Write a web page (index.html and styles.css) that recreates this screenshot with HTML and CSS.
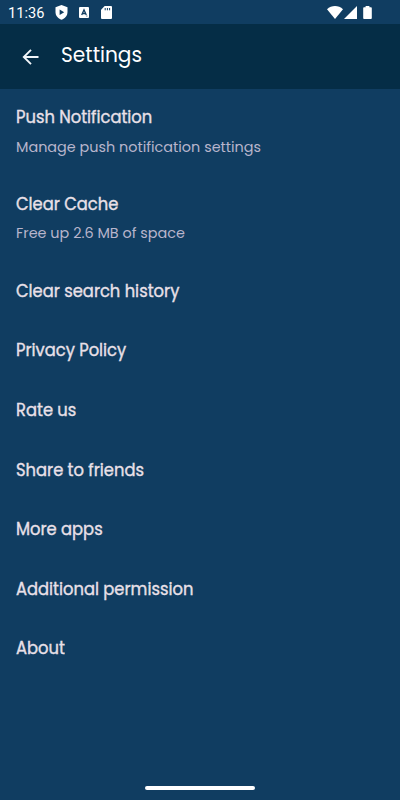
FILE: index.html
```html
<!DOCTYPE html>
<html lang="en">
<head>
    <meta charset="UTF-8">
    <meta name="viewport" content="width=device-width, initial-scale=1.0">
    <title>Settings</title>
    <link rel="stylesheet" href="styles.css">
</head>
<body>

    <!-- Status bar -->
    <div class="status-bar">
        <span class="time">11:36</span>
        <svg class="shield" width="13" height="15" viewBox="0 0 13 15">
            <path fill="#fff" d="M6.500 0L12.500 2.300V7c0 3.800-2.500 6.500-6 7.700C3 13.500.500 10.800.500 7V2.300z"/>
            <path fill="#103d61" d="M4.600 4.600v5.400l4.600-2.700z"/>
        </svg>
        <svg class="letter" width="10" height="11" viewBox="0 0 10 11">
            <rect width="10" height="11" rx="1" fill="#fff"/>
            <path fill="none" stroke="#103d61" stroke-width="1.300" d="M2.700 8L5 2.800 7.300 8M3.500 6.500h3"/>
            <path stroke="#103d61" stroke-width=".6" d="M7 9h1.500"/>
        </svg>
        <svg class="sd-card" width="11" height="13" viewBox="0 0 11 13">
            <path fill="#fff" d="M3.700 0H10q1 0 1 1v11q0 1-1 1H1q-1 0-1-1V3.800z"/>
            <path stroke="#103d61" stroke-width="1" d="M4.200 2v2.300M6.400 2v2.300M8.600 2v2.300"/>
        </svg>
        <div class="signals">
            <svg width="16" height="13" viewBox="0 0 16 13">
                <path fill="#fff" d="M0 3.300C4.500-1.100 11.500-1.100 16 3.300L8 13z"/>
            </svg>
            <svg class="cell" width="13" height="13" viewBox="0 0 13 13">
                <path fill="#fff" d="M13 0v13H0z"/>
            </svg>
            <svg class="battery" width="9" height="13" viewBox="0 0 9 13">
                <path fill="#fff" d="M2.600 0h3.800v1.200H8q.8 0 .8 1V12q0 1-.8 1H1q-.8 0-.8-1V2.200q0-1 .8-1h1.600z"/>
            </svg>
        </div>
    </div>

    <header class="toolbar">
        <svg class="back" width="17" height="16" viewBox="0 0 17 16">
            <path fill="none" stroke="#f2f6fa" stroke-width="1.900" d="M16.500 8H2M9 .8L1.800 8 9 15.200"/>
        </svg>
        <h1>Settings</h1>
    </header>

    <ul class="settings">
        <li><h2>Push Notification</h2><p>Manage push notification settings</p></li>
        <li><h2>Clear Cache</h2><p>Free up 2.6 MB of space</p></li>
        <li><h2>Clear search history</h2></li>
        <li><h2>Privacy Policy</h2></li>
        <li><h2>Rate us</h2></li>
        <li><h2>Share to friends</h2></li>
        <li><h2>More apps</h2></li>
        <li><h2>Additional permission</h2></li>
        <li><h2>About</h2></li>
    </ul>

    <div class="home-bar"></div>

</body>
</html>
```
FILE: styles.css
```css
* { margin: 0; padding: 0; box-sizing: border-box; }
body {
    height: 800px;
    display: flex;
    flex-direction: column;
    overflow: hidden;
    background: #103d61;
    color: #e9e0e8;
    font-family: Poppins, Inter, sans-serif;
    white-space: nowrap;
}
svg { display: block; flex: none; }

.status-bar {
    height: 24px;
    display: flex;
    align-items: center;
    padding: 1px 28px 0 8px;
    color: #fff;
}
.time {
    width: 47px;
    font: 14.6px/24px Roboto, sans-serif;
}
.letter { margin-left: 11px; }
.sd-card { margin-left: 12px; }
.signals {
    display: flex;
    align-items: center;
    margin-left: auto;
}
.cell { margin-left: 1px; }
.battery { margin-left: 6px; }

.toolbar {
    height: 65px;
    display: flex;
    align-items: center;
    padding: 0 22px;
    background: #052d46;
}
.back { margin-top: 1px; }

/* slightly condensed text */
h1, h2, p {
    transform: scaleX(0.96);
    transform-origin: left;
}
h1 {
    margin: -3px 0 0 22px;
    color: #fff;
    font-size: 21px;
    font-weight: 400;
    line-height: 30px;
}

.settings {
    flex: 1;
    padding-top: 1px;
    list-style: none;
}
.settings li { padding: 14px 16px 18px; }
h2 {
    font-size: 17px;
    font-weight: 400;
    line-height: 27.6px;
    -webkit-text-stroke: 0.35px;
}
p {
    margin-top: 3px;
    color: #b8b5cc;
    font-size: 15px;
    line-height: 24.3px;
}

.home-bar {
    width: 110px;
    height: 4px;
    margin: 0 auto 10px;
    border-radius: 2px;
    background: #fff;
}
```
